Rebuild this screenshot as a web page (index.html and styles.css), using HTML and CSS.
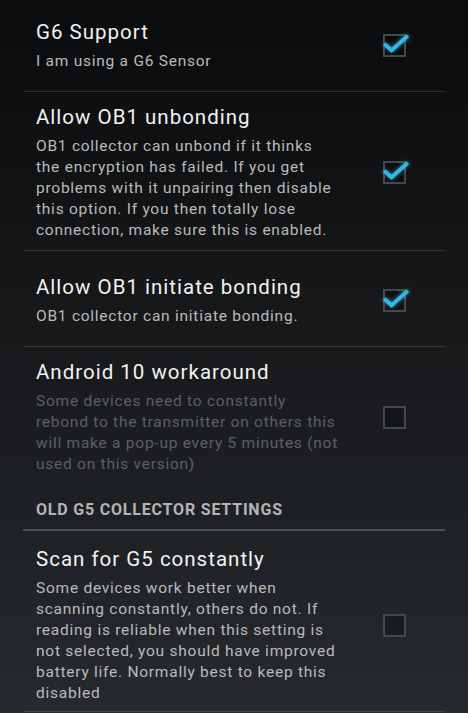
FILE: index.html
```html
<!DOCTYPE html>
<html>
<head>
<meta charset="utf-8">
<link rel="stylesheet" href="styles.css">
</head>
<body>
<div class="list">
  <div class="pref first">
    <div class="text">
      <div class="title">G6 Support</div>
      <div class="summary">I am using a G6 Sensor</div>
    </div>
    <div class="widget"><span class="box checked"></span></div>
  </div>
  <div class="pref">
    <div class="text">
      <div class="title">Allow OB1 unbonding</div>
      <div class="summary">OB1 collector can unbond if it thinks<br>the encryption has failed. If you get<br>problems with it unpairing then disable<br>this option. If you then totally lose<br>connection, make sure this is enabled.</div>
    </div>
    <div class="widget"><span class="box checked"></span></div>
  </div>
  <div class="pref">
    <div class="text">
      <div class="title">Allow OB1 initiate bonding</div>
      <div class="summary">OB1 collector can initiate bonding.</div>
    </div>
    <div class="widget"><span class="box checked"></span></div>
  </div>
  <div class="pref disabled last-in-group">
    <div class="text">
      <div class="title">Android 10 workaround</div>
      <div class="summary">Some devices need to constantly<br>rebond to the transmitter on others this<br>will make a pop-up every 5 minutes (not<br>used on this version)</div>
    </div>
    <div class="widget"><span class="box"></span></div>
  </div>
  <div class="category">OLD G5 COLLECTOR SETTINGS</div>
  <div class="pref after-header">
    <div class="text">
      <div class="title">Scan for G5 constantly</div>
      <div class="summary">Some devices work better when<br>scanning constantly, others do not. If<br>reading is reliable when this setting is<br>not selected, you should have improved<br>battery life. Normally best to keep this<br>disabled</div>
    </div>
    <div class="widget"><span class="box"></span></div>
  </div>
</div>
</body>
</html>
```

FILE: styles.css
```css
html, body {
  margin: 0;
  padding: 0;
}
body {
  width: 468px;
  min-height: 713px;
  overflow: hidden;
  background: linear-gradient(to bottom, #0a0b0c 0%, #16181a 45%, #26292e 100%);
  font-family: Roboto, "Noto Sans", sans-serif;
}
.list {
  margin: -4px 23px 0 23px;
}
.pref {
  display: flex;
  align-items: center;
  min-height: 74px;
  padding: 12px 0 9px 13px;
  border-bottom: 1px solid rgba(255, 255, 255, 0.13);
}
.pref.last-in-group {
  border-bottom: none;
}
.pref.after-header {
  padding-top: 15px;
  padding-bottom: 7px;
}
.text {
  flex: 1;
  min-width: 0;
}
.title {
  font-size: 20.5px;
  letter-spacing: 1px;
  line-height: 26px;
  color: #f2f2f2;
  white-space: nowrap;
}
.summary {
  margin-top: 6px;
  font-size: 15.5px;
  letter-spacing: 0.75px;
  line-height: 21px;
  color: #bababa;
  white-space: nowrap;
}
.disabled .summary {
  color: #5d6063;
}
.widget {
  width: 23px;
  margin-right: 39px;
  flex: none;
  display: flex;
  align-items: center;
}
.box {
  position: relative;
  display: block;
  width: 19px;
  height: 19px;
  border: 2px solid #45484b;
  background: rgba(0, 0, 0, 0.25);
}
.box.checked::after {
  content: "";
  position: absolute;
  left: 5px;
  top: -7px;
  width: 8px;
  height: 20px;
  border-right: 4px solid #33b5e5;
  border-bottom: 4px solid #33b5e5;
  transform: rotate(42deg) skewX(-6deg);
  transform-origin: center;
  filter: drop-shadow(0 0 2px rgba(51, 181, 229, 0.7));
  border-radius: 1px;
}
.category {
  padding: 16px 13px 9px 13px;
  font-size: 16px;
  letter-spacing: 0.8px;
  line-height: 20px;
  font-weight: 700;
  color: #b4b4b4;
  border-bottom: 2px solid #4a4d51;
}
```
